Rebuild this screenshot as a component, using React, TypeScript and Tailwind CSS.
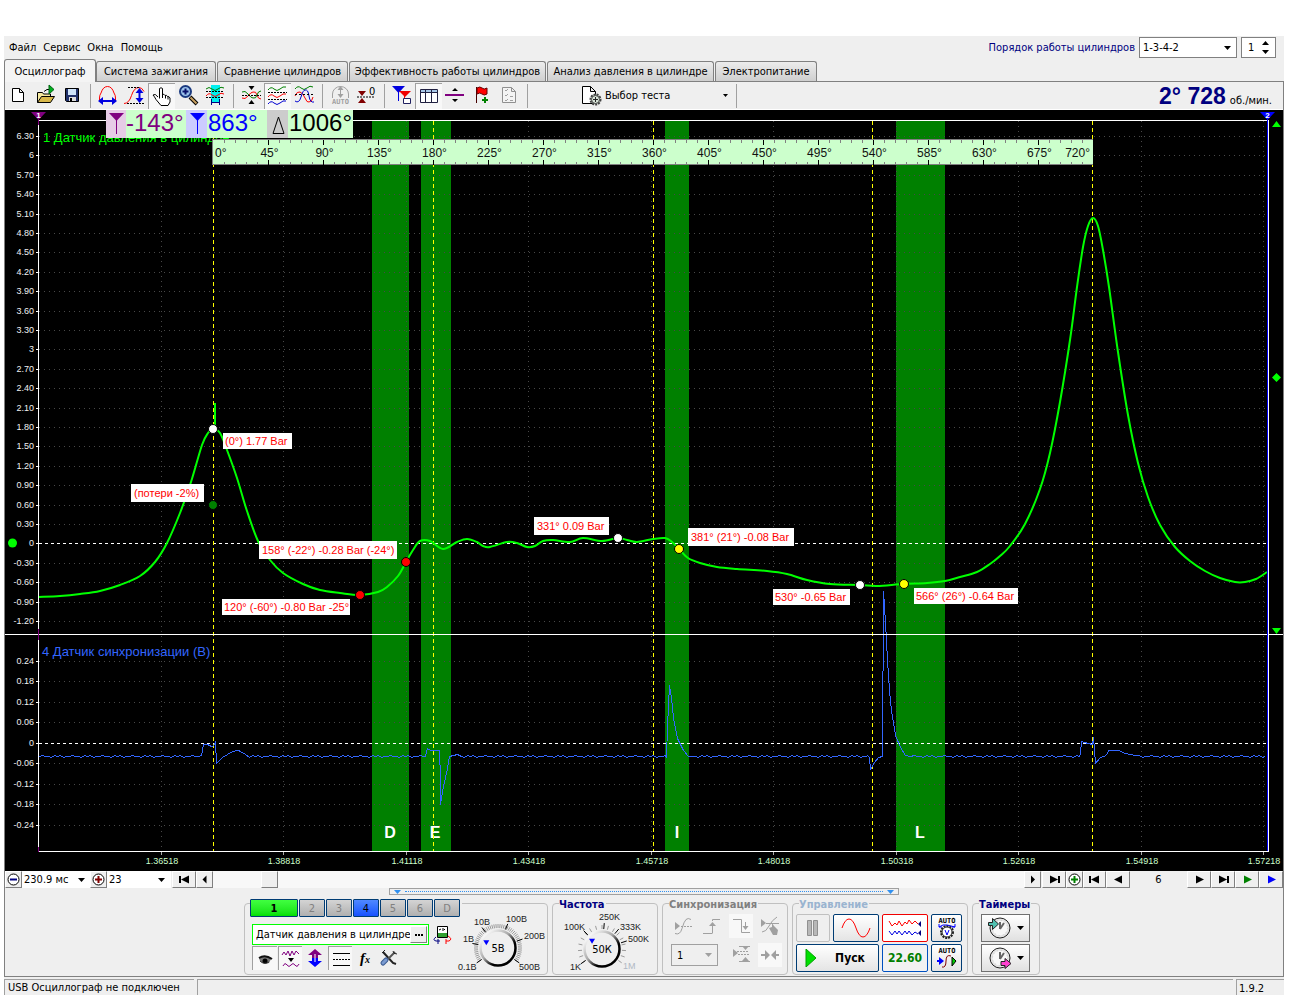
import React from 'react';

type Pt = [number, number];

const ANGLES = [45, 90, 135, 180, 225, 270, 315, 360, 405, 450, 495, 540, 585, 630, 675];
const PRESSURE_LABELS = [
  '6.30', '6', '5.70', '5.40', '5.10', '4.80', '4.50', '4.20', '3.90', '3.60', '3.30', '3', '2.70',
  '2.40', '2.10', '1.80', '1.50', '1.20', '0.90', '0.60', '0.30', '0', '-0.30', '-0.60', '-0.90', '-1.20',
];
const SYNC_LABELS = ['0.24', '0.18', '0.12', '0.06', '0', '-0.06', '-0.12', '-0.18', '-0.24'];
const TIME_LABELS = ['1.36518', '1.38818', '1.41118', '1.43418', '1.45718', '1.48018', '1.50318', '1.52618', '1.54918', '1.57218'];
const TIME_X = [161, 283, 406, 528, 651, 773, 896, 1018, 1141, 1263];

const BANDS = [
  { x: 372, w: 37, label: 'D', tx: 390 },
  { x: 421, w: 30, label: 'E', tx: 435 },
  { x: 665, w: 24, label: 'I', tx: 677 },
  { x: 896, w: 49, label: 'L', tx: 920 },
];

const CALLOUTS = [
  { x: 223, y: 433, w: 69, h: 16, text: '(0°) 1.77 Bar' },
  { x: 131, y: 484, w: 73, h: 18, text: '(потери -2%)' },
  { x: 259, y: 541, w: 138, h: 18, text: '158° (-22°) -0.28 Bar (-24°)' },
  { x: 222, y: 599, w: 128, h: 16, text: '120° (-60°) -0.80 Bar -25°' },
  { x: 534, y: 517, w: 75, h: 18, text: '331° 0.09 Bar' },
  { x: 688, y: 528, w: 106, h: 18, text: '381° (21°) -0.08 Bar' },
  { x: 773, y: 589, w: 77, h: 16, text: '530° -0.65 Bar' },
  { x: 914, y: 588, w: 104, h: 16, text: '566° (26°) -0.64 Bar' },
];

const MARKERS: { x: number; y: number; fill: string }[] = [
  { x: 213, y: 429, fill: '#fff' },
  { x: 213, y: 505, fill: '#008000' },
  { x: 360, y: 595, fill: '#f00' },
  { x: 406, y: 562, fill: '#f00' },
  { x: 618, y: 538, fill: '#fff' },
  { x: 679, y: 549, fill: '#ff0' },
  { x: 860, y: 585, fill: '#fff' },
  { x: 904, y: 584, fill: '#ff0' },
];

const PRESSURE: Pt[] = [
  [39, 597], [60, 596], [80, 594], [100, 591], [120, 585], [140, 576], [155, 562], [167, 543], [180, 513], [191, 482],
  [202, 445], [208, 433], [213, 429], [220, 433], [227, 450], [237, 478], [247, 511], [258, 541], [270, 560],
  [283, 573], [303, 584], [320, 590], [340, 593], [360, 595], [378, 592], [387, 587], [398, 576], [406, 562],
  [413, 550], [420, 541], [430, 541], [443, 549], [457, 542], [467, 539], [477, 542], [483, 546], [490, 547],
  [507, 542], [517, 543], [527, 547], [535, 546], [543, 541], [553, 540], [570, 542], [583, 538], [602, 541],
  [618, 538], [627, 540], [637, 542], [653, 539], [665, 538], [672, 542], [679, 549], [688, 558], [700, 563],
  [717, 567], [737, 569], [767, 571], [787, 574], [807, 580], [830, 584], [860, 585], [877, 586], [903, 584],
  [927, 583], [945, 581], [960, 577], [977, 572], [990, 564], [1000, 556], [1010, 546], [1025, 524], [1040, 489],
  [1050, 453], [1060, 402], [1070, 340], [1077, 287], [1083, 247], [1088, 226], [1093, 218], [1098, 226],
  [1103, 250], [1109, 287], [1118, 352], [1128, 415], [1138, 463], [1148, 497], [1160, 525], [1175, 547],
  [1190, 561], [1205, 571], [1220, 578], [1235, 582], [1245, 582], [1256, 579], [1267, 572],
];

const SYNC_EVENTS: Pt[][] = [
  [[201, 755], [203, 744], [207, 744], [211, 746], [214, 745], [215, 741], [216, 763], [222, 757], [232, 751], [238, 750], [245, 754]],
  [[425, 756], [427, 748], [430, 750], [439, 750], [440, 778], [440, 804], [443, 786], [447, 768], [449, 756], [457, 754]],
  [[666, 757], [667, 726], [669, 685], [671, 697], [673, 718], [677, 738], [683, 750], [688, 756]],
  [[867, 755], [869, 757], [870, 769], [874, 762], [878, 757], [882, 756], [883, 591], [885, 622], [887, 660], [889, 690], [891, 710], [895, 735], [900, 747], [905, 755], [910, 756]],
  [[1080, 753], [1081, 741], [1084, 742], [1092, 744], [1093, 737], [1095, 763], [1100, 757], [1106, 755], [1108, 750], [1118, 750], [1125, 753], [1135, 755]],
];

const RIPPLE = [756, 755, 756, 756, 757, 755, 756, 755, 757, 756];

function smooth(points: Pt[]) {
  let d = `M${points[0][0]} ${points[0][1]}`;
  for (let i = 0; i < points.length - 1; i++) {
    const p0 = points[Math.max(0, i - 1)];
    const p1 = points[i];
    const p2 = points[i + 1];
    const p3 = points[Math.min(points.length - 1, i + 2)];
    d += `C${p1[0] + (p2[0] - p0[0]) / 6} ${p1[1] + (p2[1] - p0[1]) / 6} ${p2[0] - (p3[0] - p1[0]) / 6} ${p2[1] - (p3[1] - p1[1]) / 6} ${p2[0]} ${p2[1]}`;
  }
  return d;
}

function syncTrace() {
  const out: Pt[] = [];
  let x = 39;
  let k = 0;
  const idle = (end: number) => {
    while (x < end) {
      out.push([x, RIPPLE[k % RIPPLE.length]]);
      k++;
      x += 3;
    }
  };
  for (const event of SYNC_EVENTS) {
    idle(event[0][0]);
    out.push(...event);
    x = event[event.length - 1][0] + 4;
  }
  idle(1267);
  return out.map((p) => `${p[0] + 0.5},${p[1] + 0.5}`).join(' ');
}

function Chart() {
  const gridY = [...PRESSURE_LABELS.map((_, i) => Math.floor(136.4 + i * 19.4)), ...SYNC_LABELS.map((_, i) => Math.floor(661.3 + i * 20.5))];
  const labels = [...PRESSURE_LABELS, ...SYNC_LABELS];
  return (
    <svg viewBox="5 110 1278 761" className="block w-full" fontFamily="'Liberation Sans', Arial, sans-serif" role="img" aria-label="Осциллограмма">
      <rect x="5" y="110" width="1278" height="761" fill="#000" />
      <g shapeRendering="crispEdges">
        {BANDS.map((b) => (
          <rect key={b.label} x={b.x} y="121" width={b.w} height="730" fill="#008000" />
        ))}
        {gridY.map((y, i) => (
          <g key={i}>
            {labels[i] === '0' ? (
              <line x1="39" x2="1267" y1={y + 0.5} y2={y + 0.5} stroke="#fff" strokeDasharray="3 3" />
            ) : (
              <line x1="39" x2="1267" y1={y + 0.5} y2={y + 0.5} stroke="#484848" strokeDasharray="1 4" />
            )}
            <line x1="36" x2="38" y1={y + 0.5} y2={y + 0.5} stroke="#fff" />
          </g>
        ))}
        {TIME_X.map((x) => (
          <g key={x}>
            <line x1={x + 0.5} x2={x + 0.5} y1="121" y2="851" stroke="#484848" strokeDasharray="1 4" />
            <line x1={x + 0.5} x2={x + 0.5} y1="852" y2="855" stroke="#aaa" />
          </g>
        ))}
      </g>
      <text x="43" y="142" fontSize="13" fill="#00ff00">1 Датчик давления в цилиндре</text>
      <text x="42" y="656" fontSize="13" fill="#3366ff">4 Датчик синхронизации (В)</text>
      <g fontSize="9" fill="#f0f0f0" textAnchor="end">
        {gridY.map((y, i) => (
          <text key={i} x="34" y={y + 3}>{labels[i]}</text>
        ))}
      </g>
      <g fontSize="9" fill="#ccffcc" textAnchor="middle">
        {TIME_X.map((x, i) => (
          <text key={x} x={x + 1} y="864">{TIME_LABELS[i]}</text>
        ))}
      </g>
      <g fontSize="16" fontWeight="bold" fill="#fff" textAnchor="middle">
        {BANDS.map((b) => (
          <text key={b.label} x={b.tx} y="838">{b.label}</text>
        ))}
      </g>
      <g shapeRendering="crispEdges" fill="none">
        {[213, 433, 653, 872, 1092].map((x) => (
          <line key={x} x1={x + 0.5} x2={x + 0.5} y1="121" y2="851" stroke="#ff0" strokeDasharray="4 3" />
        ))}
        <polyline points={syncTrace()} stroke="#3366ff" />
      </g>
      <path d={smooth(PRESSURE)} stroke="#00ff00" strokeWidth="2" fill="none" />
      <path d="M215 403V428" stroke="#00ff00" strokeWidth="2" fill="none" />
      <g shapeRendering="crispEdges" fill="none" stroke="#fff">
        <path d="M38 120.5H1268M38.5 120V852M38 851.5H1269M1268.5 120V852M5 634.5H1283" />
        <path d="M38.5 118V125M38.5 629V640M38.5 847V852" stroke="#800080" />
        <path d="M1267.5 118V851" stroke="#0000ff" />
      </g>
      <path d="M31 112H46L38.500 120z" fill="#800080" />
      <path d="M1260 112H1275L1267.500 120z" fill="#0000ff" />
      <g fontSize="8" fontWeight="bold" fill="#fff" textAnchor="middle">
        <text x="38.500" y="118">1</text>
        <text x="1267.500" y="118">2</text>
      </g>
      <g fill="#00ff00">
        <circle cx="12.500" cy="543" r="4.500" />
        <path d="M1276.500 121L1281 127H1272zM1276.500 634L1281 628H1272zM1276.500 373L1281 377.500L1276.500 382L1272 377.500z" />
      </g>
      {MARKERS.map((m, i) => (
        <circle key={i} cx={m.x} cy={m.y} r="4.500" fill={m.fill} stroke="#000" />
      ))}
      {CALLOUTS.map((c) => (
        <g key={c.text}>
          <rect x={c.x} y={c.y} width={c.w} height={c.h} fill="#fff" />
          <text x={c.x + (c.h === 18 ? 3 : 2)} y={c.y + c.h / 2 + 4} fontSize="11" fill="#ff0000">{c.text}</text>
        </g>
      ))}
      <g shapeRendering="crispEdges">
        <rect x="212" y="139" width="881" height="26" fill="#ccffcc" />
        <path d="M212 139.500H1093M212 164.500H1093M212.500 139V165" stroke="#808080" />
        {Array.from({ length: 79 }, (_, k) => {
          const i = k + 1;
          const x = 213.5 + i * 11;
          const major = i % 5 === 0;
          return (
            <path key={i} d={major ? `M${x} 140V145M${x} 160V165` : `M${x} 140V143M${x} 162V165`} stroke={major ? '#000' : '#808080'} />
          );
        })}
      </g>
      <g fontSize="12" fill="#111">
        <text x="215" y="157">0°</text>
        {ANGLES.map((a) => (
          <text key={a} x={214.5 + (a / 45) * 55} y="157" textAnchor="middle">{a}°</text>
        ))}
        <text x="1090" y="157" textAnchor="end">720°</text>
      </g>
    </svg>
  );
}

function Readouts() {
  return (
    <div className="absolute top-0 left-[101px] flex h-[28px] bg-[#ccffcc] font-['Liberation_Sans',Arial,sans-serif] text-[24px] leading-[26px]">
      <svg viewBox="0 0 20 28" className="w-5 bg-[#e6cce6]"><path d="M3 3h15l-7.500 8z" fill="#800080" /><path d="M10.500 8v16" stroke="#800080" /></svg>
      <span className="w-[60px] text-[#800080]">-143°</span>
      <svg viewBox="0 0 21 28" className="w-[21px] bg-[#ccccff]"><path d="M4 3h15l-7.500 8z" fill="#0000ff" /><path d="M11.500 8v16" stroke="#0000ff" /></svg>
      <span className="w-[60px] pl-px text-[#0000ff]">863°</span>
      <svg viewBox="0 0 21 28" className="w-[21px] bg-[#cccccc]"><path d="M11.500 7L17 23.500H6z" fill="none" stroke="#000" /></svg>
      <span className="w-[65px] pl-px text-black">1006°</span>
    </div>
  );
}

/* ---------- toolbar ---------- */

const Icon = ({ children, size = 24 }: { children: React.ReactNode; size?: number }) => (
  <svg width={size} height={size} viewBox={`0 0 ${size} ${size}`} fill="none" className="shrink-0" aria-hidden="true">
    {children}
  </svg>
);

const toolbar: { name: string; pressed?: boolean; icon: React.ReactNode }[][] = [
  [
    { name: 'Новый', icon: <path d="M5.500 5.500h7l4 4v9h-11zM12.500 5.500v4h4" fill="#fff" stroke="#000" /> },
    {
      name: 'Открыть',
      icon: (
        <>
          <path d="M3.500 19.500v-10h5l1 1.500h7v3" fill="#f5e9a0" stroke="#000" />
          <path d="M3.500 19.500l4-6h13l-4 6z" fill="#d8b84a" stroke="#000" />
          <path d="M10 8.500q3-3 6-2" stroke="#000" />
          <path d="M15 2l5 4.500-5 4.500z" fill="#00b020" stroke="#006010" />
        </>
      ),
    },
    {
      name: 'Сохранить',
      icon: (
        <>
          <path d="M4.500 5.500h13v13h-12l-1-1z" fill="#20306a" stroke="#000" />
          <path d="M7 6h8v6H7z" fill="#cfe4fa" />
          <path d="M8 14h7v4H8z" fill="#ddd" />
          <path d="M9 15h2v3h-2z" fill="#000" />
        </>
      ),
    },
  ],
  [
    {
      name: 'Масштаб по X',
      icon: (
        <>
          <path d="M3.500 18V15q0-3 1.500-5 2-6.500 6.500-6.500t6.500 6.500q1.500 2 1.500 5v3" stroke="#f00" />
          <path d="M6 18h11" stroke="#0000e0" strokeWidth="2" />
          <path d="M2 18l5-4v8zM21 18l-5-4v8z" fill="#0000e0" />
        </>
      ),
    },
    {
      name: 'Масштаб по Y',
      icon: (
        <>
          <path d="M1 20.500q5 0 7.500-8t7.500-8q3 0 5 4" stroke="#f00" />
          <path d="M5 4.500h11M4 20.500h18" stroke="#000" strokeDasharray="2 1" />
          <path d="M16.500 9v8" stroke="#0000e0" strokeWidth="2" />
          <path d="M16.500 5l-4 5h8zM16.500 20l-4-5h8z" fill="#0000e0" />
        </>
      ),
    },
    {
      name: 'Рука',
      pressed: true,
      icon: <path d="M9.500 14.500V4.500q1.500-1.500 3 0v6q1.500-1 2.500 1 1.500-1 2.500 1 1.500-.5 2.500 1.500v4l-2 3.500h-7l-5-6q-1.500-3-3-4.500 2-2 5 2M12.500 10v4M15.500 11.500v3M18 12.500v3" fill="#fff" stroke="#000" />,
    },
    {
      name: 'Лупа',
      icon: (
        <>
          <path d="M13 14l7 7" stroke="#000" strokeWidth="4" />
          <path d="M13.500 14.500l6 6" stroke="#c8a060" strokeWidth="2" />
          <circle cx="8.500" cy="8.500" r="5.500" fill="#9cc4ec" stroke="#1a3a80" strokeWidth="2" />
          <path d="M5.500 8.500h6M8.500 5.500v6" stroke="#08106a" strokeWidth="2" />
        </>
      ),
    },
    {
      name: 'Интервал',
      icon: (
        <>
          <path d="M7 2h9v18H7z" fill="#00f0f0" />
          <path d="M2 6q3-3 6 0t6 0 6-1" stroke="#008000" />
          <path d="M2 8.500h18M2 14.500h18" stroke="#000" strokeDasharray="2 1" />
          <path d="M2 13q3-4 6-1t6 0 6-1" stroke="#f00" />
          <path d="M7.500 16v6M15.500 16v6M8 19.500h7" stroke="#000080" />
        </>
      ),
    },
  ],
  [
    {
      name: 'Смещение',
      icon: (
        <>
          <path d="M3 15q3 2 6-2t5-4q3-1 4 3t4 4" stroke="#f00" />
          <path d="M3 9q3-2 6 2t5 4q3 1 4-3t4-4" stroke="#008000" />
          <path d="M3 12.500h19" stroke="#000" strokeDasharray="2 1" />
          <path d="M9.500 3h6l-3 4zM9.500 21h6l-3-4z" fill="#000" />
        </>
      ),
    },
    {
      name: 'Раздельно',
      pressed: true,
      icon: (
        <>
          <path d="M2 6q3-4 6-1t6 0 6-2" stroke="#008000" />
          <path d="M2 13q3-4 6-1t6 0 6-2" stroke="#f00" />
          <path d="M2 20q3-4 6-1t6 0 6-2" stroke="#0000d0" />
          <path d="M2 8.500h19M2 15.500h19" stroke="#000" strokeDasharray="2 1" />
        </>
      ),
    },
    {
      name: 'Вместе',
      icon: (
        <>
          <path d="M2 6q3-4 6-1t6 0 6-1" stroke="#008000" />
          <path d="M2 13q2-5 5-4t5 6 4 4q3 0 4-5" stroke="#f00" />
          <path d="M2 18q4 3 6-4t4-7q3-1 4 6t5 6" stroke="#0000d0" />
          <path d="M2 11.500h19" stroke="#000" strokeDasharray="2 2" />
        </>
      ),
    },
  ],
  [
    {
      name: 'Авто',
      icon: (
        <>
          <path d="M4.500 15v-4a8 7.500 0 0 1 16 0v4" stroke="#a0a0a0" />
          <path d="M12.500 5v9" stroke="#a0a0a0" />
          <path d="M12.500 3l-3 4h6zM12.500 15l-3-4h6z" fill="#a0a0a0" />
          <text x="12.500" y="21" fontSize="7" fontWeight="bold" textAnchor="middle" fill="#a0a0a0" fontFamily="'DejaVu Sans Mono',monospace">AUTO</text>
        </>
      ),
    },
    {
      name: 'Ноль',
      icon: (
        <>
          <path d="M3 8h8l-4 5zM3 20h8l-4-5z" fill="#800000" />
          <path d="M2 14h18" stroke="#000" strokeDasharray="2 1" />
          <text x="14" y="12" fontSize="11" fill="#000" fontFamily="'DejaVu Sans Condensed',sans-serif">0</text>
        </>
      ),
    },
  ],
  [
    {
      name: 'Маркеры',
      icon: (
        <>
          <path d="M2 3h13l-6.500 7z" fill="#0000e0" />
          <path d="M8.500 9v9" stroke="#0000e0" />
          <path d="M9 8h12l-6 6z" fill="#f00000" />
          <path d="M14.500 12v8" stroke="#f00000" />
          <path d="M13.500 15.500h7v5h-7z" fill="#fff" stroke="#202060" />
        </>
      ),
    },
    {
      name: 'Таблица',
      pressed: true,
      icon: (
        <>
          <path d="M3.500 5.500h17v13h-17z" fill="#fff" stroke="#202040" />
          <path d="M4 6h16v2H4z" fill="#a8c8e8" />
          <path d="M3 8.500h17M8.500 6v13M14.500 6v13" stroke="#202040" />
        </>
      ),
    },
    {
      name: 'Разделить',
      icon: (
        <>
          <path d="M1 12h19" stroke="#800080" strokeWidth="2" />
          <path d="M8 8h6l-3-3zM8 16h6l-3 3z" fill="#000" />
        </>
      ),
    },
    {
      name: 'Флаг',
      icon: (
        <>
          <path d="M5.500 4v16" stroke="#400" />
          <path d="M6 5q3-2 5 0t5 0v6q-3 2-5 0t-5 0z" fill="#f00" stroke="#600" />
          <path d="M11 17h6M14 14v6" stroke="#008000" strokeWidth="2" />
        </>
      ),
    },
    {
      name: 'Список',
      icon: (
        <>
          <path d="M4.500 4.500h9l4 4v11h-13zM13.500 4.500v4h4" fill="#f4f4f4" stroke="#909090" />
          <path d="M7 7l1 1 2-2M7 12l1 1 2-2M7 17l1 1 2-2M12 13.500h3M12 17.500h3" stroke="#a0a0a0" />
        </>
      ),
    },
  ],
];

const Separator = () => <span className="mx-auto h-6 w-px bg-[#a0a0a0]" />;

const Down = ({ fill = '#000' }: { fill?: string }) => (
  <svg width="7" height="4" viewBox="0 0 7 4" className="pointer-events-none shrink-0" aria-hidden="true"><path d="M0 0h7L3.500 4z" fill={fill} /></svg>
);

function Toolbar() {
  return (
    <div role="toolbar" className="flex h-[28px] items-center border-b border-white bg-[#efefef]">
      {toolbar.map((group, gi) => (
        <React.Fragment key={gi}>
          <div className="flex">
            {group.map((b) => (
              <button
                key={b.name}
                type="button"
                aria-label={b.name}
                aria-pressed={b.pressed}
                className={b.pressed ? 'flex h-[26px] w-[27px] justify-center border-t border-l border-[#a0a0a0] bg-[#f8f8f8]' : 'flex h-[26px] w-[27px] justify-center'}
              >
                <Icon>{b.icon}</Icon>
              </button>
            ))}
          </div>
          <div className="flex w-2"><Separator /></div>
        </React.Fragment>
      ))}
      <button type="button" className="flex h-[26px] w-[201px] items-center pr-1 pl-[50px] text-left text-[11px]">
        <Icon>
          <path d="M1.500 2.500h8l5 5v12h-13zM9.500 2.500v5h5" fill="#fff" stroke="#000" />
          <circle cx="14.500" cy="15.500" r="5" fill="#c8d8c8" stroke="#444" strokeWidth="2" strokeDasharray="2 1" />
          <circle cx="14.500" cy="15.500" r="4" fill="#d8e4d8" stroke="#444" />
          <path d="M12 15.500h5M14.500 13v5" stroke="#222" />
        </Icon>
        <span className="flex-1">Выбор теста</span>
        <svg width="5" height="3" viewBox="0 0 5 3" aria-hidden="true"><path d="M0 0h5L2.500 3z" /></svg>
      </button>
      <div className="ml-1 flex w-2"><span className="h-6 w-px bg-[#a0a0a0]" /></div>
      <div className="ml-auto flex items-baseline gap-1 pr-[11px]">
        <b className="font-['Liberation_Sans',Arial,sans-serif] text-[23px] leading-6 text-[#000080]">2° 728</b>
        <span className="text-[11px]">об./мин.</span>
      </div>
    </div>
  );
}

/* ---------- header ---------- */

const TABS = [
  { label: 'Осциллограф', cls: 'w-[91px]' },
  { label: 'Система зажигания', cls: 'w-[120px]' },
  { label: 'Сравнение цилиндров', cls: 'w-[131px]' },
  { label: 'Эффективность работы цилиндров', cls: 'w-[197px]' },
  { label: 'Анализ давления в цилиндре', cls: 'w-[167px]' },
  { label: 'Электропитание', cls: 'w-[102px]' },
];

function Header() {
  return (
    <header>
      <div className="flex h-[23px] items-center justify-between pr-2 pl-[5px]">
        <nav className="flex gap-[7px] text-[11px]">
          {['Файл', 'Сервис', 'Окна', 'Помощь'].map((m) => (
            <button key={m} type="button">{m}</button>
          ))}
        </nav>
        <div className="flex items-center gap-1 text-[11px]">
          <label htmlFor="order" className="text-[#000080]">Порядок работы цилиндров</label>
          <div className="relative flex items-center">
            <select id="order" className="h-[21px] w-[98px] appearance-none border border-[#808080] bg-white pl-[3px]">
              <option>1-3-4-2</option>
            </select>
            <span className="pointer-events-none absolute right-[6px]"><Down /></span>
          </div>
          <div className="flex h-[21px] w-[35px] items-center justify-between border border-[#808080] bg-white pr-[6px] pl-[6px]">
            <input aria-label="Цилиндр" defaultValue="1" className="w-2 bg-transparent" />
            <span className="flex flex-col gap-[5px]">
              <button type="button" aria-label="Больше" className="rotate-180"><Down /></button>
              <button type="button" aria-label="Меньше"><Down /></button>
            </span>
          </div>
        </div>
      </div>
      <div role="tablist" className="flex h-[22px] items-end text-[11px]">
        {TABS.map((t, i) => (
          <button
            key={t.label}
            role="tab"
            type="button"
            aria-selected={i === 0}
            className={
              i === 0
                ? 'relative -mb-px h-[23px] w-[92px] shrink-0 rounded-t-[3px] border border-b-0 border-[#808080] bg-[#f4f4f4] whitespace-nowrap'
                : `${t.cls} mr-px h-[20px] shrink-0 rounded-t-[3px] border border-b-0 border-[#808080] bg-linear-to-b from-[#ececec] to-[#cfcfcf] whitespace-nowrap`
            }
          >
            {t.label}
          </button>
        ))}
      </div>
    </header>
  );
}

/* ---------- transport row ---------- */

function TBtn({ label, cls, color = '#000', d }: { label: string; cls: string; color?: string; d: string }) {
  return (
    <button type="button" aria-label={label} className={`${cls} flex h-[17px] shrink-0 items-center justify-center border border-white border-r-[#808080] border-b-[#808080] bg-[#efefef]`}>
      <svg width="13" height="9" viewBox="0 0 13 9" aria-hidden="true"><path d={d} fill={color} /></svg>
    </button>
  );
}

const D_FIRST = 'M1 1h2v7H1zM11 0.500v8L3 4.500z';
const D_LAST = 'M10 1h2v7h-2zM2 0.500v8l8-4z';
const D_PREV = 'M10 0.500v8L2 4.500z';
const D_NEXT = 'M3 0.500v8l8-4z';

function ZoomBtn({ label, color, plus }: { label: string; color: string; plus: boolean }) {
  return (
    <button type="button" aria-label={label} className="flex h-[17px] w-[17px] shrink-0 items-center justify-center border border-white border-r-[#808080] border-b-[#808080] bg-[#efefef]">
      <svg width="13" height="13" viewBox="0 0 13 13" className="shrink-0" aria-hidden="true">
        <circle cx="6.500" cy="6.500" r="5.500" fill="#fff" stroke="#000" />
        <path d={plus ? 'M3 5.500h7v2H3zM5.500 3h2v7h-2z' : 'M3 5.500h7v2H3z'} fill={color} />
      </svg>
    </button>
  );
}

function Transport() {
  return (
    <div className="flex h-[17px] items-center bg-[#efefef] text-[11px]">
      <ZoomBtn label="Уменьшить" color="#000080" plus={false} />
      <div className="relative flex items-center">
        <select aria-label="Длительность" className="h-[17px] w-[68px] appearance-none bg-white pl-[2px]"><option>230.9 мс</option></select>
        <span className="pointer-events-none absolute right-[5px]"><Down /></span>
      </div>
      <ZoomBtn label="Увеличить" color="#800000" plus />
      <div className="relative mr-px flex items-center">
        <select aria-label="Кадр" className="h-[17px] w-[64px] appearance-none bg-white pl-[2px]"><option>23</option></select>
        <span className="pointer-events-none absolute right-[6px]"><Down /></span>
      </div>
      <TBtn label="В начало" cls="w-[24px]" d={D_FIRST} />
      <TBtn label="Влево" cls="w-[17px]" d="M8.500 0.500v8L4.500 4.500z" />
      <input
        type="range"
        aria-label="Прокрутка"
        min={0}
        max={100}
        defaultValue={6}
        className="h-[17px] min-w-0 flex-1 appearance-none bg-[#f8f8f8] [&::-webkit-slider-thumb]:h-[17px] [&::-webkit-slider-thumb]:w-[17px] [&::-webkit-slider-thumb]:appearance-none [&::-webkit-slider-thumb]:border [&::-webkit-slider-thumb]:border-white [&::-webkit-slider-thumb]:border-r-[#808080] [&::-webkit-slider-thumb]:border-b-[#808080] [&::-webkit-slider-thumb]:bg-[#efefef]"
      />
      <TBtn label="Вправо" cls="w-[17px] mr-px" d="M5 0.500v8l4-4z" />
      <TBtn label="В конец" cls="w-[24px]" d={D_LAST} />
      <ZoomBtn label="Добавить" color="#008000" plus />
      <TBtn label="Первый" cls="w-[23px]" d={D_FIRST} />
      <TBtn label="Предыдущий" cls="w-[24px]" d={D_PREV} />
      <span className="flex h-[17px] w-[57px] items-center justify-center">6</span>
      <TBtn label="Следующий" cls="w-[24px]" d={D_NEXT} />
      <TBtn label="Последний" cls="w-[24px]" d={D_LAST} />
      <TBtn label="Воспроизвести" cls="w-[24px]" d={D_NEXT} color="#008000" />
      <TBtn label="Воспроизвести далее" cls="w-[24px]" d={D_NEXT} color="#0000ff" />
    </div>
  );
}

/* ---------- bottom panels ---------- */

function Group({ title, titleCls, cls, children }: { title: string; titleCls: string; cls: string; children: React.ReactNode }) {
  return (
    <section className={`${cls} relative mt-[6px] h-[72px] shrink-0 rounded-[4px] border border-[#c0c0c0]`}>
      <h2 className={`${titleCls} absolute -top-[5px] left-[6px] bg-[#efefef] pr-px text-[11px] leading-3 font-bold whitespace-nowrap`}>{title}</h2>
      {children}
    </section>
  );
}

interface DialLabel { t: string; x: number; y: number; c?: string }

function Dial({ w, cx, cy, value, labels, ticks, long, pointer }: { w: number; cx: number; cy: number; value: string; labels: DialLabel[]; ticks: number; long: number[]; pointer: number }) {
  const ray = (deg: number, r1: number, r2: number) => {
    const a = (deg * Math.PI) / 180;
    return `M${cx + r1 * Math.sin(a)} ${cy - r1 * Math.cos(a)}L${cx + r2 * Math.sin(a)} ${cy - r2 * Math.cos(a)}`;
  };
  const pa = (pointer * Math.PI) / 180;
  const px = cx + 13 * Math.sin(pa);
  const py = cy - 13 * Math.cos(pa);
  const id = 'knob' + cx;
  return (
    <svg width={w} height="66" viewBox={`0 0 ${w} 66`} className="block" fontFamily="'Liberation Sans', Arial, sans-serif" role="img" aria-label={value}>
      <defs>
        <linearGradient id={id} x1="0.1" y1="0.1" x2="0.85" y2="0.85">
          <stop offset="0" stopColor="#fff" />
          <stop offset="0.45" stopColor="#aaa" />
          <stop offset="0.75" stopColor="#000" />
          <stop offset="1" stopColor="#000" />
        </linearGradient>
      </defs>
      {Array.from({ length: ticks + 1 }, (_, i) => (
        <path key={i} d={ray(-125 + (250 * i) / ticks, 20, 24)} stroke="#9a9a9a" />
      ))}
      {long.map((a) => (
        <path key={a} d={ray(a, 20, 26)} stroke="#000" />
      ))}
      <circle cx={cx} cy={cy} r="17.500" fill="#efefef" stroke={`url(#${id})`} strokeWidth="2.500" />
      <path d="M-3 -2h6L0 3z" fill="#0000ff" transform={`translate(${px} ${py})`} />
      <text x={cx} y={cy + 4} fontSize="11" textAnchor="middle" fill="#000" fontFamily="'DejaVu Sans Condensed',sans-serif">{value}</text>
      {labels.map((l) => (
        <text key={l.t} x={l.x} y={l.y} fontSize="9" fill={l.c || '#222'}>{l.t}</text>
      ))}
    </svg>
  );
}

const CHANNELS = ['2', '3', '4', '5', '6', 'D'];

function ChannelPanel() {
  return (
    <section className="relative mt-[6px] flex h-[72px] w-[304px] shrink-0 rounded-[4px] border border-[#c0c0c0]">
      <div className="-mt-[5px] w-[211px] pl-[5px]">
        <div className="flex w-[212px] gap-px bg-[#efefef] text-[11px]">
          <button type="button" className="h-[18px] w-[48px] rounded-[1px] border border-[#003c74] bg-linear-to-b from-[#40ff40] to-[#00e000] font-bold">1</button>
          {CHANNELS.map((c) => (
            <button
              key={c}
              type="button"
              className={
                c === '4'
                  ? 'h-[18px] w-[26px] rounded-[1px] border border-[#003c74] bg-linear-to-b from-[#5088ff] to-[#1850ff] text-black'
                  : 'h-[18px] w-[26px] rounded-[1px] border border-[#003c74] bg-linear-to-b from-[#d4d4d4] to-[#b0b0b0] text-[#808080]'
              }
            >
              {c}
            </button>
          ))}
        </div>
        <div className="mt-[7px] ml-[2px] flex items-center gap-1">
          <div className="flex h-[21px] w-[177px] items-center border border-[#00ff00] bg-white p-px">
            <input aria-label="Датчик" defaultValue="Датчик давления в цилиндре" className="min-w-0 flex-1 bg-white pl-[2px] text-[11px]" />
            <button type="button" aria-label="Выбрать датчик" className="flex h-[17px] w-[17px] items-center justify-center border border-white border-r-[#808080] border-b-[#808080] bg-[#efefef]">
              <svg width="8" height="2" viewBox="0 0 8 2" aria-hidden="true"><path d="M0 0h2v2H0zM3 0h2v2H3zM6 0h2v2H6z" /></svg>
            </button>
          </div>
          <button type="button" aria-label="Калибровка">
            <Icon size={20}>
              <path d="M4.500 1.500h10v11h-10z" fill="#fff" stroke="#000" />
              <path d="M5 8h9v4H5z" fill="#30a030" />
              <path d="M6 5l2-1M10 3v3M12 5l-1-1" stroke="#000" />
              <path d="M3 12q-4 3 0 4h4M5 14v5" stroke="#000080" />
              <path d="M15 11q5 3 1 5h-3M13 14v5" stroke="#f00" />
            </Icon>
          </button>
        </div>
        <div className="mt-px ml-[2px] flex items-center gap-px">
          <button type="button" aria-label="Видимость" className="flex h-6 w-[25px] items-center justify-center border-t border-l border-[#a0a0a0] bg-[#f8f8f8]">
            <Icon size={20}>
              <path d="M4 9q6-4 12 0v1l-2 4q-6 2-9-2z" fill="#777" />
              <path d="M4 9q6-4 13 1" stroke="#111" strokeWidth="2" />
              <circle cx="10" cy="12" r="2.500" fill="#000" />
              <path d="M5 12q4 4 9 1" stroke="#333" />
            </Icon>
          </button>
          <button type="button" aria-label="Фильтр" className="flex h-6 w-[24px] items-center justify-center border-t border-l border-[#a0a0a0] bg-[#f8f8f8]">
            <Icon size={20}>
              <path d="M1 6l2-3 2 3 2-4 2 5 2-5 2 4 2-4 3 3" stroke="#800080" />
              <path d="M7 9h6l-3 4z" fill="#000" />
              <path d="M2 17q2-4 4-1t4 0 4 0 4-1" stroke="#800080" />
            </Icon>
          </button>
          <button type="button" aria-label="Сдвиг" className="flex h-6 w-[24px] items-center justify-center">
            <Icon size={20}>
              <path d="M10 1l7 6h-4v3H7V7H3z" fill="#800080" />
              <path d="M10 19l7-6h-4v-3H7v3H3z" fill="#0000ff" />
              <path d="M10 6v8" stroke="#fff" />
            </Icon>
          </button>
          <button type="button" aria-label="Линии" className="flex h-6 w-[24px] items-center justify-center border-t border-l border-[#a0a0a0] bg-[#f8f8f8]">
            <Icon size={20}>
              <path d="M2 4.500h17M2 16.500h17" stroke="#000" />
              <path d="M2 10.500h17" stroke="#000" strokeDasharray="2 1" />
            </Icon>
          </button>
          <button type="button" aria-label="Функция" className="flex h-6 w-[24px] items-center justify-center font-['Liberation_Serif',serif] text-[15px] leading-none font-bold italic">f<span className="mt-1 text-[10px]">x</span></button>
          <button type="button" aria-label="Настройки" className="flex h-6 w-[22px] items-center justify-center">
            <Icon size={20}>
              <path d="M4 4l10 11 3 1" stroke="#222" strokeWidth="2" />
              <path d="M3 5l3-3" stroke="#222" />
              <path d="M16 4l-7 7" stroke="#555" strokeWidth="2" />
              <path d="M14 3q0 3 4 3" stroke="#222" />
              <path d="M7 12l-3 3" stroke="#3a5a90" strokeWidth="5" strokeLinecap="round" />
              <path d="M7 12l-3 3" stroke="#7a9ad0" strokeWidth="3" strokeLinecap="round" />
            </Icon>
          </button>
        </div>
      </div>
      <div className="mt-[4px]">
        <Dial
          w={90}
          cx={42}
          cy={40}
          value="5В"
          ticks={50}
          long={[-125, -80, -38, 22, 70, 125]}
          pointer={-64}
          labels={[
            { t: '10В', x: 18, y: 17 },
            { t: '100В', x: 50, y: 14 },
            { t: '1В', x: 7, y: 34 },
            { t: '200В', x: 68, y: 31 },
            { t: '0.1В', x: 2, y: 62 },
            { t: '500В', x: 63, y: 62 },
          ]}
        />
      </div>
    </section>
  );
}

function SyncPanel() {
  const g = '#a0a0a0';
  return (
    <Group title="Синхронизация" titleCls="text-[#808080]" cls="w-[126px]">
      <div className="flex items-center gap-[5px] pt-[10px] pl-[8px]">
        <button type="button" aria-label="Режим"><Icon><path d="M4 8l5 4-5 4z" fill={g} /><path d="M4 19.500q5 2 7-5t4-9q2-2 5 0" stroke={g} /><path d="M10 12.500h11" stroke={g} strokeDasharray="2 1" /></Icon></button>
        <button type="button" aria-label="Фронт"><Icon><path d="M3 19.500h9.500M12.500 7V5.500H20M12.500 19v-8" stroke={g} /><path d="M12.500 8l-3.500 4h7z" fill={g} /></Icon></button>
        <button type="button" aria-label="Спад" className="bg-[#f8f8f8]"><Icon><path d="M4 5.500h8.500v13H21M16.500 8v5" stroke={g} /><path d="M16.500 16l-3-4h6z" fill={g} /></Icon></button>
        <button type="button" aria-label="Ручной"><Icon><path d="M3 5l5 4-5 4z" fill={g} /><path d="M4 18q4 0 7-6t8-9M8 9.500h13" stroke={g} /><path d="M11 14l3-1v-4l2 3 4 4-1 5h-4z" fill={g} /></Icon></button>
      </div>
      <div className="flex items-center pt-[5px] pl-[8px]">
        <div className="relative flex items-center">
          <select aria-label="Канал синхронизации" className="h-[22px] w-[47px] appearance-none border border-[#a0a0a0] bg-[#efefef] pl-[5px] text-[11px]"><option>1</option></select>
          <span className="pointer-events-none absolute right-[6px]"><Down fill={g} /></span>
        </div>
        <button type="button" aria-label="Уровень" className="ml-[12px]"><Icon><path d="M3 6l5 4-5 4z" fill={g} /><path d="M9 3.500h11M9 18.500h11" stroke={g} /><path d="M7 8.500h12M8 11.500h11" stroke={g} strokeDasharray="2 1" /><path d="M12 3h7l-3.500 4zM12 18h7l-3.500-4z" fill={g} /></Icon></button>
        <button type="button" aria-label="Сжать" className="ml-1 bg-[#f8f8f8]"><Icon><path d="M3 12h5M16 12h5" stroke={g} strokeWidth="2" /><path d="M7 7l5 5-5 5zM18 7l-5 5 5 5z" fill={g} /></Icon></button>
      </div>
    </Group>
  );
}

const XP = 'flex h-[28px] items-center justify-center rounded-[2px] border border-[#003c74] bg-linear-to-b from-white to-[#e4e4e4]';

function ControlPanel() {
  return (
    <Group title="Управление" titleCls="text-[#9ab4d0]" cls="w-[176px]">
      <div className="grid grid-cols-[34px_46px_46px_31px] gap-x-[3px] gap-y-[2px] pt-[10px] pl-[3px]">
        <button type="button" aria-label="Пауза" className="flex h-[28px] items-center justify-center rounded-[2px] border border-[#c0c0c0] bg-[#efefef]">
          <svg width="12" height="16" viewBox="0 0 12 16"><path d="M.5.5h4v15h-4zM6.500.5h4v15h-4z" fill="#b8b8b8" stroke="#909090" /></svg>
        </button>
        <button type="button" aria-label="Генератор" className={XP}>
          <svg width="30" height="22" viewBox="0 0 30 22" fill="none"><path d="M1 11Q4 2 8 2T15 11t7 9 7-9" stroke="#f00" /></svg>
        </button>
        <button type="button" aria-label="Синхронный режим" className="flex h-[28px] items-center justify-center rounded-[2px] border border-[#f00000] bg-white">
          <svg width="34" height="20" viewBox="0 0 34 20" fill="none">
            <path d="M1 3l3 5 3-3 2 2 2-4 3 5 3-4 2 2 2-4 3 4 3-3 3 3" stroke="#f00" />
            <path d="M1 13l3 4 3-4 2 3 2-3 3 4 3-4 2 3 2-3 3 4 3-3 3 2" stroke="#0000e0" />
            <path d="M33 3v6l-3-3zM33 12v6l-3-3z" fill="#000080" />
          </svg>
        </button>
        <button type="button" aria-label="Автонастройка" className={XP}>
          <svg width="26" height="24" viewBox="0 0 26 24" fill="none">
            <text x="13" y="7" fontSize="7" fontWeight="bold" textAnchor="middle" fill="#000" fontFamily="'DejaVu Sans Mono',monospace">AUTO</text>
            <circle cx="13" cy="16" r="6" stroke="#222" strokeWidth="2" strokeDasharray="2 1" />
            <circle cx="13" cy="16" r="5" fill="#fff" stroke="#222" />
            <path d="M11 14l2 5 2-5" stroke="#00f" />
            <path d="M5 11q4-3 8-2t8 2M5 8v3h3M21 8v3h-3" stroke="#00f" />
          </svg>
        </button>
        <button type="button" className={`${XP} col-span-2 gap-[18px] pr-[5px] text-[12px] font-bold`}>
          <svg width="12" height="18" viewBox="0 0 12 18"><path d="M1 0l10 9L1 18z" fill="#00e000" stroke="#00a000" /></svg>
          Пуск
        </button>
        <button type="button" className="flex h-[28px] items-center justify-center rounded-[2px] border border-[#0050c0] bg-[#f2f2f2] text-[12px] font-bold text-[#008000]">22.60</button>
        <button type="button" aria-label="Автозапуск" className={XP}>
          <svg width="26" height="24" viewBox="0 0 26 24" fill="none">
            <text x="13" y="7" fontSize="7" fontWeight="bold" textAnchor="middle" fill="#000" fontFamily="'DejaVu Sans Mono',monospace">AUTO</text>
            <path d="M3 15h4" stroke="#00f" strokeWidth="2" />
            <path d="M5 11l5 4-5 4z" fill="#00f" />
            <path d="M8 21q4 1 4-6t5-5" stroke="#800000" />
            <path d="M18 11l4 4-4 5z" fill="#0c0" stroke="#000" />
          </svg>
        </button>
      </div>
    </Group>
  );
}

function Clock({ arrow, out }: { arrow: string; out: boolean }) {
  return (
    <svg width="25" height="24" viewBox="0 0 25 24" fill="none" aria-hidden="true">
      <circle cx="13" cy="12" r="10" fill="#e4e4e4" stroke="#222" />
      <circle cx="13" cy="12" r="7.500" fill="#f8f8f8" stroke="#ccc" strokeDasharray="1 3" />
      <path d="M13 13V6M13 13l4-6" stroke="#666" strokeWidth="2" />
      <path d={out ? 'M14 15.500h4v-3l6 5-6 5v-3h-4z' : 'M1.500 6.500h4v-4l6 5.500-6 5.500v-4h-4z'} fill={arrow} stroke="#222" />
    </svg>
  );
}

function TimersPanel() {
  return (
    <Group title="Таймеры" titleCls="text-[#000080]" cls="w-[68px]">
      <div className="flex flex-col gap-[2px] pt-[10px] pl-[8px]">
        {[false, true].map((out) => (
          <button key={String(out)} type="button" aria-label={out ? 'Таймер остановки' : 'Таймер запуска'} className="flex h-[28px] w-[49px] items-center justify-center gap-[5px] border border-[#707070] bg-linear-to-b from-white to-[#e0e0e0]">
            <Clock out={out} arrow={out ? '#ff40d0' : '#50c0b0'} />
            <Down />
          </button>
        ))}
      </div>
    </Group>
  );
}

export default function App() {
  return (
    <div className="min-h-[1000px] bg-white pt-[36px] pr-3 pl-1 font-['DejaVu_Sans_Condensed',Tahoma,'Noto_Sans',sans-serif] leading-none text-black">
      <div className="bg-[#efefef]">
        <Header />
        <main className="border border-[#808080]">
          <Toolbar />
          <div className="relative">
            <Chart />
            <Readouts />
          </div>
          <Transport />
          <div className="flex justify-center">
            <div className="flex h-[7px] w-[510px] items-center justify-between border border-[#a0a0a0] px-1">
              <Down fill="#3090f0" />
              <span className="mx-1 flex-1 border-t border-dotted border-[#3090f0]" />
              <Down fill="#3090f0" />
            </div>
          </div>
          <div className="flex h-[81px] justify-center gap-1 pt-[2px] pr-1">
            <ChannelPanel />
            <Group title="Частота" titleCls="text-[#000080]" cls="w-[106px]">
              <div className="pt-[4px]">
                <Dial
                  w={104}
                  cx={49}
                  cy={41}
                  value="50К"
                  ticks={16}
                  long={[-125, -45, 5, 40, 72]}
                  pointer={-50}
                  labels={[
                    { t: '250K', x: 46, y: 12 },
                    { t: '100K', x: 11, y: 22 },
                    { t: '333K', x: 67, y: 22 },
                    { t: '500K', x: 75, y: 34 },
                    { t: '1K', x: 17, y: 62 },
                    { t: '1M', x: 70, y: 61, c: '#b0b8c4' },
                  ]}
                />
              </div>
            </Group>
            <SyncPanel />
            <ControlPanel />
            <TimersPanel />
          </div>
        </main>
        <footer className="flex gap-[3px] pt-[2px] text-[11px]">
          <span className="h-[16px] w-[190px] border-t border-l border-[#a0a0a0] pt-[2px] pl-[3px] whitespace-nowrap">USB Осциллограф не подключен</span>
          <span className="h-[16px] flex-1 border-t border-l border-[#a0a0a0]" />
          <span className="h-[16px] w-[48px] border-t border-l border-[#a0a0a0] pt-[3px] pl-[2px]">1.9.2</span>
        </footer>
      </div>
    </div>
  );
}
